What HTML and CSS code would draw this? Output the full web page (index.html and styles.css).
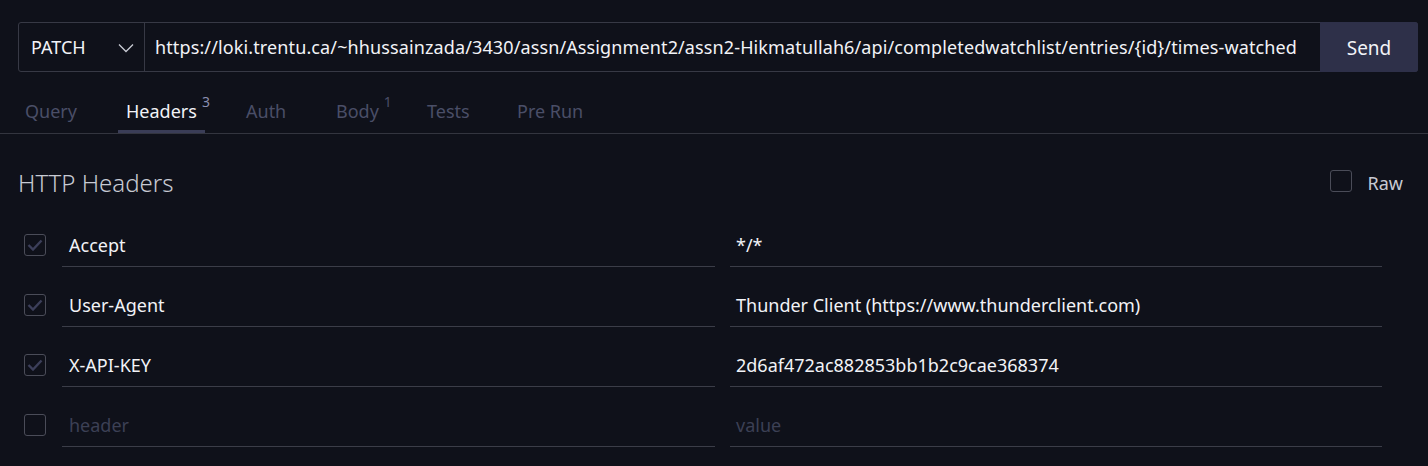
FILE: index.html
```html
<!DOCTYPE html>
<html>
<head>
<meta charset="utf-8">
<link rel="stylesheet" href="styles.css">
</head>
<body>
<div class="page">
  <div class="urlbar">
    <div class="method">
      <span>PATCH</span>
      <svg class="chev" width="16" height="10" viewBox="0 0 16 10"><path d="M1 1.5 L8 8.5 L15 1.5" fill="none" stroke="#c9cbd4" stroke-width="1.3"/></svg>
    </div>
    <div class="url">https://loki.trentu.ca/~hhussainzada/3430/assn/Assignment2/assn2-Hikmatullah6/api/completedwatchlist/entries/{id}/times-watched</div>
    <button class="send">Send</button>
  </div>
  <div class="tabs">
    <div class="tab">Query</div>
    <div class="tab active"><span class="label">Headers<sup>3</sup></span></div>
    <div class="tab">Auth</div>
    <div class="tab"><span class="label">Body<sup>1</sup></span></div>
    <div class="tab">Tests</div>
    <div class="tab">Pre Run</div>
  </div>
  <div class="section">
    <div class="section-head">
      <div class="title">HTTP Headers</div>
      <div class="raw"><span class="box"></span><span>Raw</span></div>
    </div>
    <div class="rows">
      <div class="row">
        <span class="box checked"><svg width="16" height="12" viewBox="0 0 16 12"><path d="M1.5 6 L6 10.5 L14.5 1.5" fill="none" stroke="#3c3f5a" stroke-width="2.4"/></svg></span>
        <div class="field">Accept</div>
        <div class="field">*/*</div>
      </div>
      <div class="row">
        <span class="box checked"><svg width="16" height="12" viewBox="0 0 16 12"><path d="M1.5 6 L6 10.5 L14.5 1.5" fill="none" stroke="#3c3f5a" stroke-width="2.4"/></svg></span>
        <div class="field">User-Agent</div>
        <div class="field">Thunder Client (https://www.thunderclient.com)</div>
      </div>
      <div class="row">
        <span class="box checked"><svg width="16" height="12" viewBox="0 0 16 12"><path d="M1.5 6 L6 10.5 L14.5 1.5" fill="none" stroke="#3c3f5a" stroke-width="2.4"/></svg></span>
        <div class="field">X-API-KEY</div>
        <div class="field">2d6af472ac882853bb1b2c9cae368374</div>
      </div>
      <div class="row">
        <span class="box"></span>
        <div class="field placeholder">header</div>
        <div class="field placeholder">value</div>
      </div>
    </div>
  </div>
</div>
</body>
</html>
```

FILE: styles.css
```css
* { box-sizing: border-box; }
html, body { margin: 0; padding: 0; background: #0f111a; }
body {
  font-family: "Noto Sans", "Open Sans", sans-serif;
  color: #ffffff;
  width: 1428px;
  height: 466px;
  overflow: hidden;
}
.page { padding-top: 22px; }
.urlbar {
  display: flex;
  margin: 0 10px 0 18px;
  height: 50px;
  border: 1px solid #373945;
  border-radius: 3px;
}
.method {
  width: 126px;
  flex: none;
  display: flex;
  align-items: center;
  justify-content: space-between;
  padding: 0 10px 0 12px;
  border-right: 1px solid #373945;
  font-size: 18px;
  color: #f2f3f7;
}
.chev { margin-top: 1px; }
.url {
  flex: 1;
  display: flex;
  align-items: center;
  padding: 0 0 0 10px;
  font-size: 18px;
  color: #f2f3f7;
  white-space: nowrap;
  overflow: hidden;
  letter-spacing: 0.12px;
}
.send {
  width: 98px;
  flex: none;
  margin: -1px -1px -1px 0;
  background: #2e3049;
  border: none;
  border-radius: 0 3px 3px 0;
  color: #f2f3f7;
  font-family: inherit;
  font-size: 19px;
  padding: 2px 0 0;
}
.tabs {
  display: grid;
  grid-template-columns: 101px 120px 90px 91px 90px auto;
  height: 62px;
  border-bottom: 1px solid #33353f;
  padding-left: 17px;
  align-items: stretch;
}
.tab {
  justify-self: start;
  padding: 27px 8px 0;
  font-size: 18px;
  color: #4a4e67;
  border-bottom: 3px solid transparent;
}
.label { position: relative; }
.tab sup {
  position: absolute;
  left: 100%;
  top: -4px;
  margin-left: 5px;
  font-size: 14px;
  line-height: 1;
}
.tab.active {
  color: #f2f3f7;
  border-bottom-color: #3a3d57;
}
.tab.active sup { color: #8a8fb0; }
.section { padding: 0 46px 0 18px; }
.section-head {
  display: flex;
  align-items: center;
  justify-content: space-between;
  height: 50px;
  margin-top: 24px;
}
.title {
  font-size: 24px;
  font-weight: 300;
  color: #c7cad3;
  padding-bottom: 2px;
}
.raw {
  display: flex;
  align-items: center;
  gap: 16px;
  font-size: 18px;
  color: #c7cad3;
  margin-right: -21px;
}
.raw .box { margin-top: -4px; }
.box {
  width: 22px;
  height: 22px;
  border: 1px solid #4a4c58;
  border-radius: 3px;
  display: flex;
  align-items: center;
  justify-content: center;
  flex: none;
}
.rows { margin-top: 8px; }
.row {
  display: flex;
  align-items: center;
  height: 60px;
  padding-left: 6px;
}
.row .box { margin-right: 16px; margin-top: -3px; }
.field {
  flex: 1;
  height: 42px;
  border-bottom: 1px solid #3b3d48;
  display: flex;
  align-items: center;
  padding: 0 0 2px 7px;
  font-size: 18px;
  color: #f2f3f7;
}
.field + .field { margin-left: 15px; padding-left: 6px; }
.placeholder { color: #3c4055; }
```
